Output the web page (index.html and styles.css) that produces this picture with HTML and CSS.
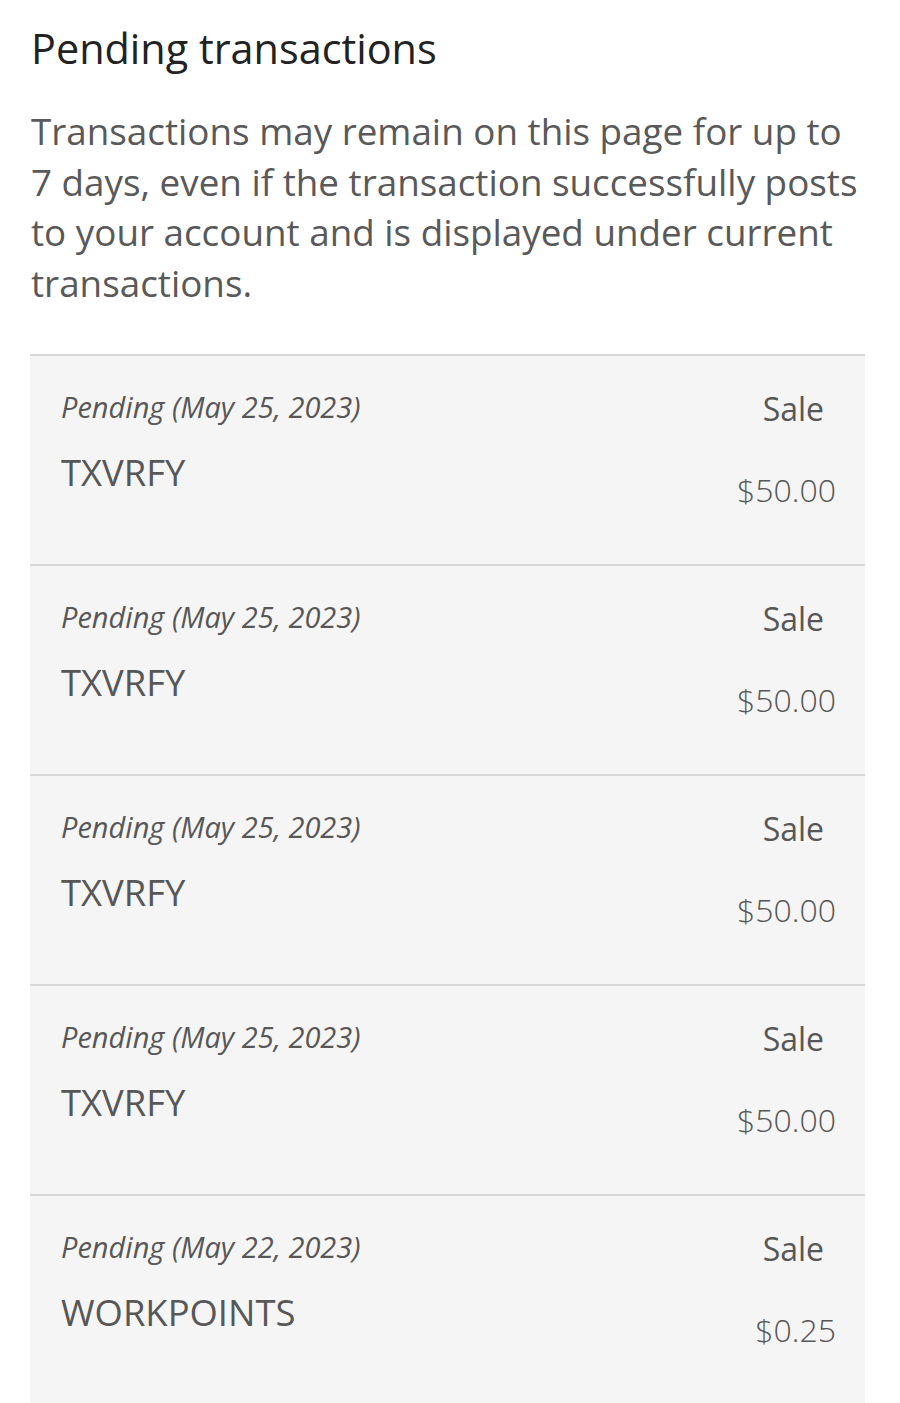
FILE: index.html
```html
<!DOCTYPE html>
<html lang="en">
<head>
<meta charset="utf-8">
<title>Pending transactions</title>
<link rel="stylesheet" href="styles.css">
</head>
<body>
<main class="page">
  <h1 class="title">Pending transactions</h1>
  <p class="intro">Transactions may remain on this page for up to 7 days, even if the transaction successfully posts to your account and is displayed under current transactions.</p>
  <ul class="list">
    <li class="row">
      <div class="left"><div class="date">Pending (May 25, 2023)</div><div class="name">TXVRFY</div></div>
      <div class="right"><div class="type">Sale</div><div class="amount">$50.00</div></div>
    </li>
    <li class="row">
      <div class="left"><div class="date">Pending (May 25, 2023)</div><div class="name">TXVRFY</div></div>
      <div class="right"><div class="type">Sale</div><div class="amount">$50.00</div></div>
    </li>
    <li class="row">
      <div class="left"><div class="date">Pending (May 25, 2023)</div><div class="name">TXVRFY</div></div>
      <div class="right"><div class="type">Sale</div><div class="amount">$50.00</div></div>
    </li>
    <li class="row">
      <div class="left"><div class="date">Pending (May 25, 2023)</div><div class="name">TXVRFY</div></div>
      <div class="right"><div class="type">Sale</div><div class="amount">$50.00</div></div>
    </li>
    <li class="row">
      <div class="left"><div class="date">Pending (May 22, 2023)</div><div class="name">WORKPOINTS</div></div>
      <div class="right"><div class="type">Sale</div><div class="amount">$0.25</div></div>
    </li>
  </ul>
</main>
</body>
</html>
```

FILE: styles.css
```css
html, body {
  margin: 0;
  padding: 0;
  background: #ffffff;
}
body {
  font-family: "Open Sans", "Noto Sans", sans-serif;
}
.page {
  padding: 20px 35px 0 30px;
}
.title {
  margin: 0 0 0 1px;
  font-size: 41.4px;
  line-height: 56px;
  font-weight: 400;
  color: #222222;
}
.intro {
  margin: 30px 0 0 1px;
  font-size: 36.8px;
  line-height: 50.5px;
  color: #595959;
}
.list {
  list-style: none;
  margin: 46px 0 0 0;
  padding: 0;
}
.row {
  display: flex;
  justify-content: space-between;
  height: 208px;
  border-top: 2px solid #d8d8d8;
  background: #f5f5f5;
  padding: 0 29px 0 31px;
  color: #575757;
}
.left {
  display: flex;
  flex-direction: column;
  padding-top: 31px;
}
.date {
  font-style: italic;
  font-size: 29px;
  line-height: 40px;
}
.name {
  margin-top: 23px;
  font-size: 36.4px;
  line-height: 44px;
}
.right {
  display: flex;
  flex-direction: column;
  align-items: flex-end;
  padding-top: 33px;
}
.type {
  font-size: 32px;
  line-height: 40px;
  margin-right: 12px;
}
.amount {
  margin-top: 41px;
  font-size: 32px;
  line-height: 40px;
  font-weight: 300;
}
```
